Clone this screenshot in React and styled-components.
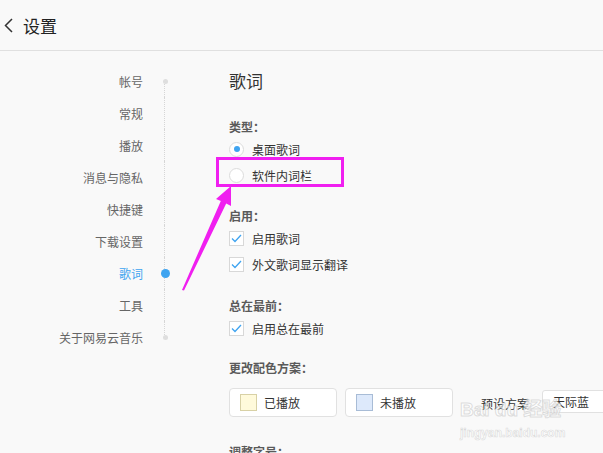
import React from "react";
import styled, { createGlobalStyle, css } from "styled-components";

const GlobalStyle = createGlobalStyle`
  html, body {
    margin: 0;
    padding: 0;
    background: #f9f9f9;
  }
  body {
    font-family: "Noto Sans CJK SC", "Noto Sans", sans-serif;
    color: #333;
    overflow: hidden;
  }
`;

const Page = styled.div`
  position: relative;
  width: 603px;
  height: 453px;
  overflow: hidden;
  background: #f9f9f9;
`;

const Header = styled.div`
  height: 50px;
  display: flex;
  align-items: center;
  border-bottom: 1px solid #e0e0e0;
`;

const BackButton = styled.div`
  width: 23px;
  display: flex;
  align-items: center;
  padding-left: 4px;
  box-sizing: border-box;
`;

const HeaderTitle = styled.div`
  font-size: 17px;
  color: #222;
  line-height: 20px;
  margin-top: 2px;
`;

const Body = styled.div`
  display: flex;
`;

const Sidebar = styled.div`
  width: 187px;
  padding-top: 14px;
  flex-shrink: 0;
`;

const NavRow = styled.div`
  display: grid;
  grid-template-columns: 143px 44px;
  height: 32px;
  align-items: center;
`;

const NavLabel = styled.div`
  text-align: right;
  font-size: 12px;
  color: ${(p) => (p.$active ? "#3fa4f0" : "#666")};
`;

const Marker = styled.div`
  position: relative;
  height: 100%;
  display: flex;
  align-items: center;
  justify-content: center;

  &::before {
    content: "";
    position: absolute;
    left: 21px;
    width: 0;
    border-left: 1px dotted #d6d6d6;
    top: ${(p) => (p.$first ? "50%" : "0")};
    bottom: ${(p) => (p.$last ? "50%" : "0")};
  }
`;

const Dot = styled.span`
  position: relative;
  z-index: 1;
  border-radius: 50%;
  ${(p) =>
    p.$active
      ? css`
          width: 9px;
          height: 9px;
          background: #3fa4f0;
        `
      : css`
          width: 5px;
          height: 5px;
          background: #dedede;
        `}
`;

const Content = styled.div`
  flex: 1;
  min-width: 0;
  padding-left: 42px;
  padding-top: 18px;
`;

const Title = styled.div`
  font-size: 17px;
  line-height: 24px;
  color: #333;
`;

const Section = styled.div`
  margin-top: ${(p) => p.$mt}px;
`;

const SectionLabel = styled.div`
  font-size: 12px;
  line-height: 18px;
  font-weight: bold;
  color: #5a5a5a;
  white-space: nowrap;
`;

const OptionRow = styled.div`
  position: relative;
  height: 26px;
  display: flex;
  align-items: center;
  font-size: 12px;
  color: #333;
`;

const Radio = styled.span`
  width: 13px;
  height: 13px;
  border: 1px solid #dcdcdc;
  border-radius: 50%;
  background: #fff;
  margin-right: 8px;
  display: flex;
  align-items: center;
  justify-content: center;

  &::after {
    content: "";
    display: ${(p) => (p.$checked ? "block" : "none")};
    width: 6px;
    height: 6px;
    border-radius: 50%;
    background: #3fa4f0;
  }
`;

const Checkbox = styled.span`
  width: 13px;
  height: 13px;
  border: 1px solid #d8d8d8;
  background: #fff;
  margin-right: 8px;
  display: flex;
  align-items: center;
  justify-content: center;
`;

const Highlight = styled.span`
  position: absolute;
  left: -13px;
  top: -5px;
  width: 128px;
  height: 30px;
  border: 3px solid #f01ff0;
  box-sizing: border-box;
  pointer-events: none;
`;

const ColorRow = styled.div`
  display: flex;
  align-items: flex-start;
  margin-top: 11px;
  white-space: nowrap;
`;

const ColorButton = styled.div`
  flex-shrink: 0;
  width: 108px;
  height: 29px;
  box-sizing: border-box;
  border: 1px solid #e1e1e1;
  border-radius: 4px;
  background: #fff;
  display: flex;
  align-items: center;
  padding-left: 10px;
  margin-right: 8px;
  font-size: 12px;
  color: #333;
`;

const Swatch = styled.span`
  width: 15px;
  height: 15px;
  border: 1px solid ${(p) => p.$border};
  background: ${(p) => p.$fill};
  margin-right: 7px;
`;

const PresetLabel = styled.div`
  flex-shrink: 0;
  margin-left: 20px;
  font-size: 12px;
  color: #333;
  line-height: 29px;
  margin-top: 1px;
`;

const PresetSelect = styled.div`
  flex-shrink: 0;
  margin-left: 13px;
  width: 90px;
  height: 23px;
  margin-top: 2px;
  box-sizing: border-box;
  border: 1px solid #e1e1e1;
  border-radius: 3px;
  background: #fff;
  font-size: 12px;
  color: #333;
  display: flex;
  align-items: center;
  padding-left: 10px;
`;

const Overlay = styled.svg`
  position: absolute;
  left: 0;
  top: 0;
  pointer-events: none;
`;

const Watermark = styled.div`
  position: absolute;
  left: 460px;
  top: 399px;
  pointer-events: none;
  white-space: nowrap;
  color: rgba(255, 255, 255, 0.7);
  -webkit-text-stroke: 1px rgba(190, 190, 190, 0.5);
  font-family: "Liberation Sans", "Noto Sans CJK SC", sans-serif;
  font-weight: bold;
`;

const WatermarkBig = styled.div`
  font-size: 19px;
  line-height: 22px;
`;

const WatermarkSmall = styled.div`
  font-size: 12px;
  line-height: 14px;
  margin-top: 5px;
  -webkit-text-stroke: 0.6px rgba(190, 190, 190, 0.55);
`;

const navItems = ["帐号", "常规", "播放", "消息与隐私", "快捷键", "下载设置", "歌词", "工具", "关于网易云音乐"];

const Check = () => (
  <svg width="11" height="9" viewBox="0 0 11 9">
    <path d="M1 4.5 L4 7.5 L10 1" fill="none" stroke="#3fa4f0" strokeWidth="1.3" />
  </svg>
);

const App = () => {
  return (
    <Page>
      <GlobalStyle />
      <Header>
        <BackButton>
          <svg width="9" height="15" viewBox="0 0 9 15">
            <path d="M8 1 L1.5 7.5 L8 14" fill="none" stroke="#333" strokeWidth="1.5" />
          </svg>
        </BackButton>
        <HeaderTitle>设置</HeaderTitle>
      </Header>
      <Body>
        <Sidebar>
          {navItems.map((item, i) => {
            const active = item === "歌词";
            const first = i === 0;
            const last = i === navItems.length - 1;
            return (
              <NavRow key={item}>
                <NavLabel $active={active}>{item}</NavLabel>
                <Marker $first={first} $last={last}>
                  {(active || first || last) && <Dot $active={active} />}
                </Marker>
              </NavRow>
            );
          })}
        </Sidebar>
        <Content>
          <Title>歌词</Title>
          <Section $mt={25}>
            <SectionLabel>类型：</SectionLabel>
            <OptionRow>
              <Radio $checked />
              桌面歌词
            </OptionRow>
            <OptionRow>
              <Highlight />
              <Radio />
              软件内词栏
            </OptionRow>
          </Section>
          <Section $mt={19}>
            <SectionLabel>启用：</SectionLabel>
            <OptionRow>
              <Checkbox>
                <Check />
              </Checkbox>
              启用歌词
            </OptionRow>
            <OptionRow>
              <Checkbox>
                <Check />
              </Checkbox>
              外文歌词显示翻译
            </OptionRow>
          </Section>
          <Section $mt={20}>
            <SectionLabel>总在最前：</SectionLabel>
            <OptionRow>
              <Checkbox>
                <Check />
              </Checkbox>
              启用总在最前
            </OptionRow>
          </Section>
          <Section $mt={18}>
            <SectionLabel>更改配色方案：</SectionLabel>
            <ColorRow>
              <ColorButton>
                <Swatch $fill="#fffadb" $border="#d8d1a6" />
                已播放
              </ColorButton>
              <ColorButton>
                <Swatch $fill="#dde9fb" $border="#a8bcd6" />
                未播放
              </ColorButton>
              <PresetLabel>预设方案</PresetLabel>
              <PresetSelect>天际蓝</PresetSelect>
            </ColorRow>
          </Section>
          <Section $mt={25}>
            <SectionLabel>调整字号：</SectionLabel>
          </Section>
        </Content>
      </Body>
      <Watermark>
        <WatermarkBig>Bai du 经验</WatermarkBig>
        <WatermarkSmall>jingyan.baidu.com</WatermarkSmall>
      </Watermark>
      <Overlay width="603" height="453" viewBox="0 0 603 453">
        <polygon
          points="231,186 216,199 220.8,201 182,290 184,290.6 226.2,203.6 231,206"
          fill="#f01ff0"
        />
      </Overlay>
    </Page>
  );
};

export default App;
